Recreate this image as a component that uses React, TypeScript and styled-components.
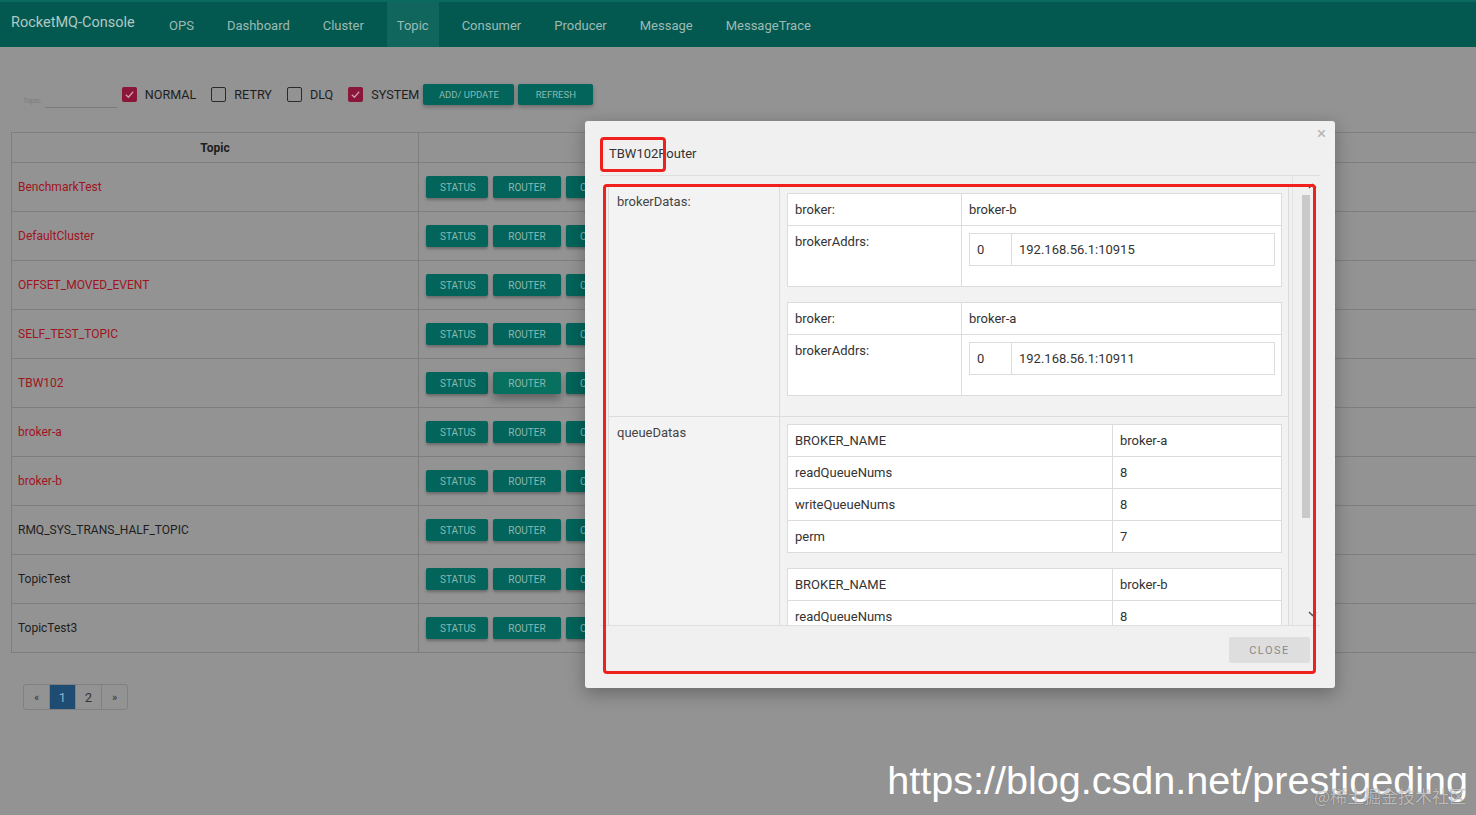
import React from 'react';
import styled, { createGlobalStyle } from 'styled-components';

const GlobalStyle = createGlobalStyle`
  html, body {
    margin: 0;
    padding: 0;
  }
  body {
    font-family: Roboto, "Liberation Sans", Arial, sans-serif;
    background: #939393;
  }
  * {
    box-sizing: border-box;
  }
`;

const navItems = ['OPS', 'Dashboard', 'Cluster', 'Topic', 'Consumer', 'Producer', 'Message', 'MessageTrace'];

const topics = [
  { name: 'BenchmarkTest', system: true },
  { name: 'DefaultCluster', system: true },
  { name: 'OFFSET_MOVED_EVENT', system: true },
  { name: 'SELF_TEST_TOPIC', system: true },
  { name: 'TBW102', system: true, active: true },
  { name: 'broker-a', system: true },
  { name: 'broker-b', system: true },
  { name: 'RMQ_SYS_TRANS_HALF_TOPIC', system: false },
  { name: 'TopicTest', system: false },
  { name: 'TopicTest3', system: false },
];

const rowActions: { label: string; width?: number }[] = [
  { label: 'STATUS', width: 62 },
  { label: 'ROUTER', width: 68 },
  { label: 'CONSUMER MANAGE' },
  { label: 'TOPIC CONFIG' },
  { label: 'SEND MESSAGE' },
  { label: 'RESET CONSUMER OFFSET' },
  { label: 'DELETE' },
];

const filters = [
  { label: 'NORMAL', checked: true },
  { label: 'RETRY', checked: false },
  { label: 'DLQ', checked: false },
  { label: 'SYSTEM', checked: true },
];

const brokerDatas = [
  { broker: 'broker-b', addr: '192.168.56.1:10915' },
  { broker: 'broker-a', addr: '192.168.56.1:10911' },
];

const queueDatas = [
  { brokerName: 'broker-a', read: 8, write: 8, perm: 7 },
  { brokerName: 'broker-b', read: 8, write: 8, perm: 6 },
];

const App: React.FC = () => {
  return (
    <Page>
      <GlobalStyle />
      <NavBar>
        <Brand>RocketMQ-Console</Brand>
        <NavList>
          {navItems.map((item) => (
            <NavItem key={item} $active={item === 'Topic'}>
              {item}
            </NavItem>
          ))}
        </NavList>
      </NavBar>

      <Main>
        <FilterRow>
          <TopicField>
            <TinyLabel>Topic:</TinyLabel>
            <UnderlineInput />
          </TopicField>
          {filters.map((f) => (
            <CheckLabel key={f.label}>
              <CheckBox $checked={f.checked}>
                {f.checked && (
                  <svg width="11" height="11" viewBox="0 0 12 12">
                    <path d="M2 6.3 L4.8 9 L10 3" fill="none" stroke="#d49bb0" strokeWidth="1.4" />
                  </svg>
                )}
              </CheckBox>
              {f.label}
            </CheckLabel>
          ))}
          <ActionButton $width={91}>ADD/ UPDATE</ActionButton>
          <ActionButton $width={75}>REFRESH</ActionButton>
        </FilterRow>

        <TopicTable>
          <thead>
            <tr>
              <HeadCell $width={407}>Topic</HeadCell>
              <HeadCell />
            </tr>
          </thead>
          <tbody>
            {topics.map((t) => (
              <tr key={t.name}>
                <NameCell $system={t.system}>{t.name}</NameCell>
                <ActionCell>
                  <ActionGroup>
                    {rowActions.map((a) => (
                      <RowButton
                        key={a.label}
                        $width={a.width}
                        $hover={t.active && a.label === 'ROUTER'}
                      >
                        {a.label}
                      </RowButton>
                    ))}
                  </ActionGroup>
                </ActionCell>
              </tr>
            ))}
          </tbody>
        </TopicTable>

        <Pager>
          <PageItem $edge="left">«</PageItem>
          <PageItem $active>1</PageItem>
          <PageItem>2</PageItem>
          <PageItem $edge="right">»</PageItem>
        </Pager>
      </Main>

      <Modal>
        <CloseX>×</CloseX>
        <ModalHeader>TBW102Router</ModalHeader>
        <ModalBody>
          <ScrollContent>
            <OuterTable>
              <tbody>
                <tr>
                  <OuterLabel>brokerDatas:</OuterLabel>
                  <OuterValue>
                    {brokerDatas.map((b) => (
                      <InnerTable key={b.broker}>
                        <tbody>
                          <tr>
                            <InnerCell $width={174}>broker:</InnerCell>
                            <InnerCell>{b.broker}</InnerCell>
                          </tr>
                          <tr>
                            <InnerCell $width={174}>brokerAddrs:</InnerCell>
                            <NestCell>
                              <InnerTable>
                                <tbody>
                                  <tr>
                                    <InnerCell $width={42}>0</InnerCell>
                                    <InnerCell>{b.addr}</InnerCell>
                                  </tr>
                                </tbody>
                              </InnerTable>
                            </NestCell>
                          </tr>
                        </tbody>
                      </InnerTable>
                    ))}
                  </OuterValue>
                </tr>
                <tr>
                  <OuterLabel>queueDatas</OuterLabel>
                  <OuterValue>
                    {queueDatas.map((q) => (
                      <InnerTable key={q.brokerName}>
                        <tbody>
                          <tr>
                            <InnerCell $width={325}>BROKER_NAME</InnerCell>
                            <InnerCell>{q.brokerName}</InnerCell>
                          </tr>
                          <tr>
                            <InnerCell $width={325}>readQueueNums</InnerCell>
                            <InnerCell>{q.read}</InnerCell>
                          </tr>
                          <tr>
                            <InnerCell $width={325}>writeQueueNums</InnerCell>
                            <InnerCell>{q.write}</InnerCell>
                          </tr>
                          <tr>
                            <InnerCell $width={325}>perm</InnerCell>
                            <InnerCell>{q.perm}</InnerCell>
                          </tr>
                        </tbody>
                      </InnerTable>
                    ))}
                  </OuterValue>
                </tr>
              </tbody>
            </OuterTable>
          </ScrollContent>
          <ScrollRail>
            <svg width="9" height="6" viewBox="0 0 9 6" style={{ marginLeft: 15, marginTop: 7 }}>
              <path d="M1 5 L4.5 1.5 L8 5" fill="none" stroke="#555" strokeWidth="1.5" />
            </svg>
            <Thumb />
            <RailSpacer />
            <svg width="9" height="6" viewBox="0 0 9 6" style={{ marginLeft: 15, marginBottom: 8 }}>
              <path d="M1 1 L4.5 4.5 L8 1" fill="none" stroke="#555" strokeWidth="1.5" />
            </svg>
          </ScrollRail>
        </ModalBody>
        <ModalFooter>
          <CloseButton>CLOSE</CloseButton>
        </ModalFooter>
      </Modal>

      <MarkBox $left={600} $top={137} $w={66} $h={35} />
      <MarkBox $left={603} $top={184} $w={713} $h={490} />

      <Watermark>https://blog.csdn.net/prestigeding</Watermark>
      <SourceMark>@稀土掘金技术社区</SourceMark>
    </Page>
  );
};

const Page = styled.div`
  position: relative;
  width: 100%;
  height: 815px;
  overflow: hidden;
  background: #939393;
`;

const NavBar = styled.header`
  display: flex;
  height: 47px;
  background: #03594f;
  border-top: 2px solid #0b6a5f;
`;

const Brand = styled.div`
  flex: 0 0 159px;
  display: flex;
  align-items: center;
  padding: 0 0 4px 11px;
  font-size: 14.5px;
  color: #b2c8c4;
`;

const NavList = styled.nav`
  display: flex;
  gap: 13px;
`;

const NavItem = styled.a<{ $active?: boolean }>`
  display: flex;
  align-items: center;
  padding: 2px 10px 0;
  font-size: 13px;
  color: #9dbab5;
  background: ${({ $active }) => ($active ? '#10665c' : 'transparent')};
`;

const Main = styled.main`
  padding: 33px 0 0 11px;
`;

const FilterRow = styled.div`
  display: flex;
  align-items: center;
  height: 28px;
  padding-left: 12px;
`;

const TopicField = styled.div`
  display: flex;
  align-items: flex-end;
  align-self: flex-end;
  margin-right: 5px;
`;

const TinyLabel = styled.span`
  font-size: 7px;
  color: #7b7b7b;
  padding-bottom: 3px;
`;

const UnderlineInput = styled.div`
  width: 72px;
  height: 14px;
  margin-left: 3px;
  border-bottom: 1px solid #7a7a7a;
`;

const CheckLabel = styled.label`
  display: flex;
  align-items: center;
  gap: 8px;
  margin-right: 15px;
  font-size: 12.6px;
  color: #1e1e1e;
  &:nth-last-of-type(1) {
    margin-right: 4px;
  }
`;

const CheckBox = styled.span<{ $checked: boolean }>`
  display: inline-flex;
  align-items: center;
  justify-content: center;
  width: 15px;
  height: 15px;
  border-radius: 2px;
  background: ${({ $checked }) => ($checked ? '#8a1639' : 'transparent')};
  border: ${({ $checked }) => ($checked ? 'none' : '1.5px solid #2a2a2a')};
`;

const ActionButton = styled.button<{ $width: number }>`
  width: ${({ $width }) => $width}px;
  height: 21px;
  margin-right: 4px;
  border: none;
  border-radius: 2px;
  background: #02645a;
  color: #8cb8b1;
  font-family: Roboto, "Liberation Sans", Arial, sans-serif;
  font-size: 9.5px;
  box-shadow: 0 2px 4px rgba(0, 0, 0, 0.28);
`;

const TopicTable = styled.table`
  width: 1480px;
  margin-top: 24px;
  border-collapse: collapse;
`;

const HeadCell = styled.th<{ $width?: number }>`
  width: ${({ $width }) => ($width ? `${$width}px` : 'auto')};
  height: 30px;
  border: 1px solid #7e7e7e;
  font-size: 12px;
  font-weight: bold;
  color: #1e1e1e;
  text-align: center;
`;

const NameCell = styled.td<{ $system: boolean }>`
  height: 49px;
  padding: 0 6px;
  border: 1px solid #7e7e7e;
  font-size: 12px;
  color: ${({ $system }) => ($system ? '#a0141f' : '#1e1e1e')};
`;

const ActionCell = styled.td`
  padding: 0 7px;
  border: 1px solid #7e7e7e;
`;

const ActionGroup = styled.div`
  display: flex;
  gap: 5px;
`;

const RowButton = styled.button<{ $hover?: boolean; $width?: number }>`
  width: ${({ $width }) => ($width ? `${$width}px` : 'auto')};
  height: 22px;
  padding: 0 14px;
  border: none;
  border-radius: 2px;
  background: ${({ $hover }) => ($hover ? '#07705f' : '#02645a')};
  color: #8cb8b1;
  font-family: Roboto, "Liberation Sans", Arial, sans-serif;
  font-size: 10px;
  white-space: nowrap;
  box-shadow: ${({ $hover }) =>
    $hover ? '0 5px 10px rgba(0, 0, 0, 0.35)' : '0 2px 3px rgba(0, 0, 0, 0.28)'};
`;

const Pager = styled.div`
  display: flex;
  margin: 31px 0 0 13px;
`;

const PageItem = styled.span<{ $active?: boolean; $edge?: 'left' | 'right' }>`
  display: flex;
  align-items: center;
  justify-content: center;
  width: 27px;
  height: 26px;
  margin-left: -1px;
  border: 1px solid #808080;
  border-radius: ${({ $edge }) =>
    $edge === 'left' ? '3px 0 0 3px' : $edge === 'right' ? '0 3px 3px 0' : '0'};
  background: ${({ $active }) => ($active ? '#1e4c73' : 'transparent')};
  color: ${({ $active }) => ($active ? '#8fb0cc' : '#333')};
  font-size: ${({ $edge }) => ($edge ? '11px' : '13px')};
`;

const Modal = styled.div`
  position: absolute;
  left: 585px;
  top: 121px;
  width: 750px;
  height: 567px;
  display: flex;
  flex-direction: column;
  padding: 0 15px;
  background: #f0f0f0;
  border-radius: 3px;
  box-shadow: 0 5px 18px rgba(0, 0, 0, 0.3);
`;

const CloseX = styled.span`
  position: absolute;
  top: 2px;
  right: 9px;
  font-size: 17px;
  color: #b4b4b4;
`;

const ModalHeader = styled.div`
  height: 55px;
  padding: 24px 9px 0;
  border-bottom: 1px solid #dedede;
  font-size: 13px;
  line-height: 17px;
  color: #333;
`;

const ModalBody = styled.div`
  display: flex;
  height: 449px;
  overflow: hidden;
`;

const ScrollContent = styled.div`
  flex: 1;
  padding: 9px 3px 0 8px;
  overflow: hidden;
`;

const ScrollRail = styled.div`
  display: flex;
  flex-direction: column;
  width: 28px;
  border-left: 1px solid #e4e4e4;
`;

const Thumb = styled.div`
  width: 8px;
  height: 323px;
  margin: 6px 0 0 9px;
  background: #c9c9c9;
`;

const RailSpacer = styled.div`
  flex: 1;
`;

const OuterTable = styled.table`
  width: 100%;
  border-collapse: collapse;
`;

const OuterLabel = styled.td`
  width: 171px;
  padding: 7px 8px;
  vertical-align: top;
  border: 1px solid #dcdcdc;
  background: #f3f3f3;
  font-size: 13px;
  line-height: 17px;
  color: #444;
`;

const OuterValue = styled.td`
  padding: 7px 6px 5px 7px;
  vertical-align: top;
  border: 1px solid #dcdcdc;
  background: #f2f2f2;
`;

const InnerTable = styled.table`
  width: 100%;
  margin-bottom: 15px;
  border-collapse: collapse;
  background: #fff;
`;

const InnerCell = styled.td<{ $width?: number }>`
  width: ${({ $width }) => ($width ? `${$width}px` : 'auto')};
  padding: 7px;
  vertical-align: top;
  border: 1px solid #dcdcdc;
  font-size: 13px;
  line-height: 17px;
  color: #333;
`;

const NestCell = styled.td`
  padding: 7px 6px 5px 7px;
  vertical-align: top;
  border: 1px solid #dcdcdc;
`;

const ModalFooter = styled.div`
  display: flex;
  justify-content: flex-end;
  padding: 11px 10px 0 0;
  border-top: 1px solid #dedede;
`;

const CloseButton = styled.button`
  width: 81px;
  height: 26px;
  border: none;
  border-radius: 2px;
  background: #dedede;
  color: #8a8a8a;
  font-family: Roboto, "Liberation Sans", Arial, sans-serif;
  font-size: 11px;
  letter-spacing: 1.5px;
`;

const MarkBox = styled.div<{ $left: number; $top: number; $w: number; $h: number }>`
  position: absolute;
  left: ${({ $left }) => $left}px;
  top: ${({ $top }) => $top}px;
  width: ${({ $w }) => $w}px;
  height: ${({ $h }) => $h}px;
  border: 3px solid #f0201c;
  border-radius: 4px;
  pointer-events: none;
`;

const Watermark = styled.div`
  position: absolute;
  top: 760px;
  right: 8px;
  font-family: "Liberation Sans", Arial, sans-serif;
  font-size: 39.6px;
  line-height: 40px;
  color: #fff;
  white-space: nowrap;
`;

const SourceMark = styled.div`
  position: absolute;
  top: 786px;
  right: 10px;
  font-family: "Noto Sans CJK SC", "Liberation Sans", sans-serif;
  font-size: 17px;
  line-height: 20px;
  color: rgba(235, 235, 235, 0.7);
  text-shadow: 0 0 1px rgba(0, 0, 0, 0.5);
  white-space: nowrap;
`;

export default App;
